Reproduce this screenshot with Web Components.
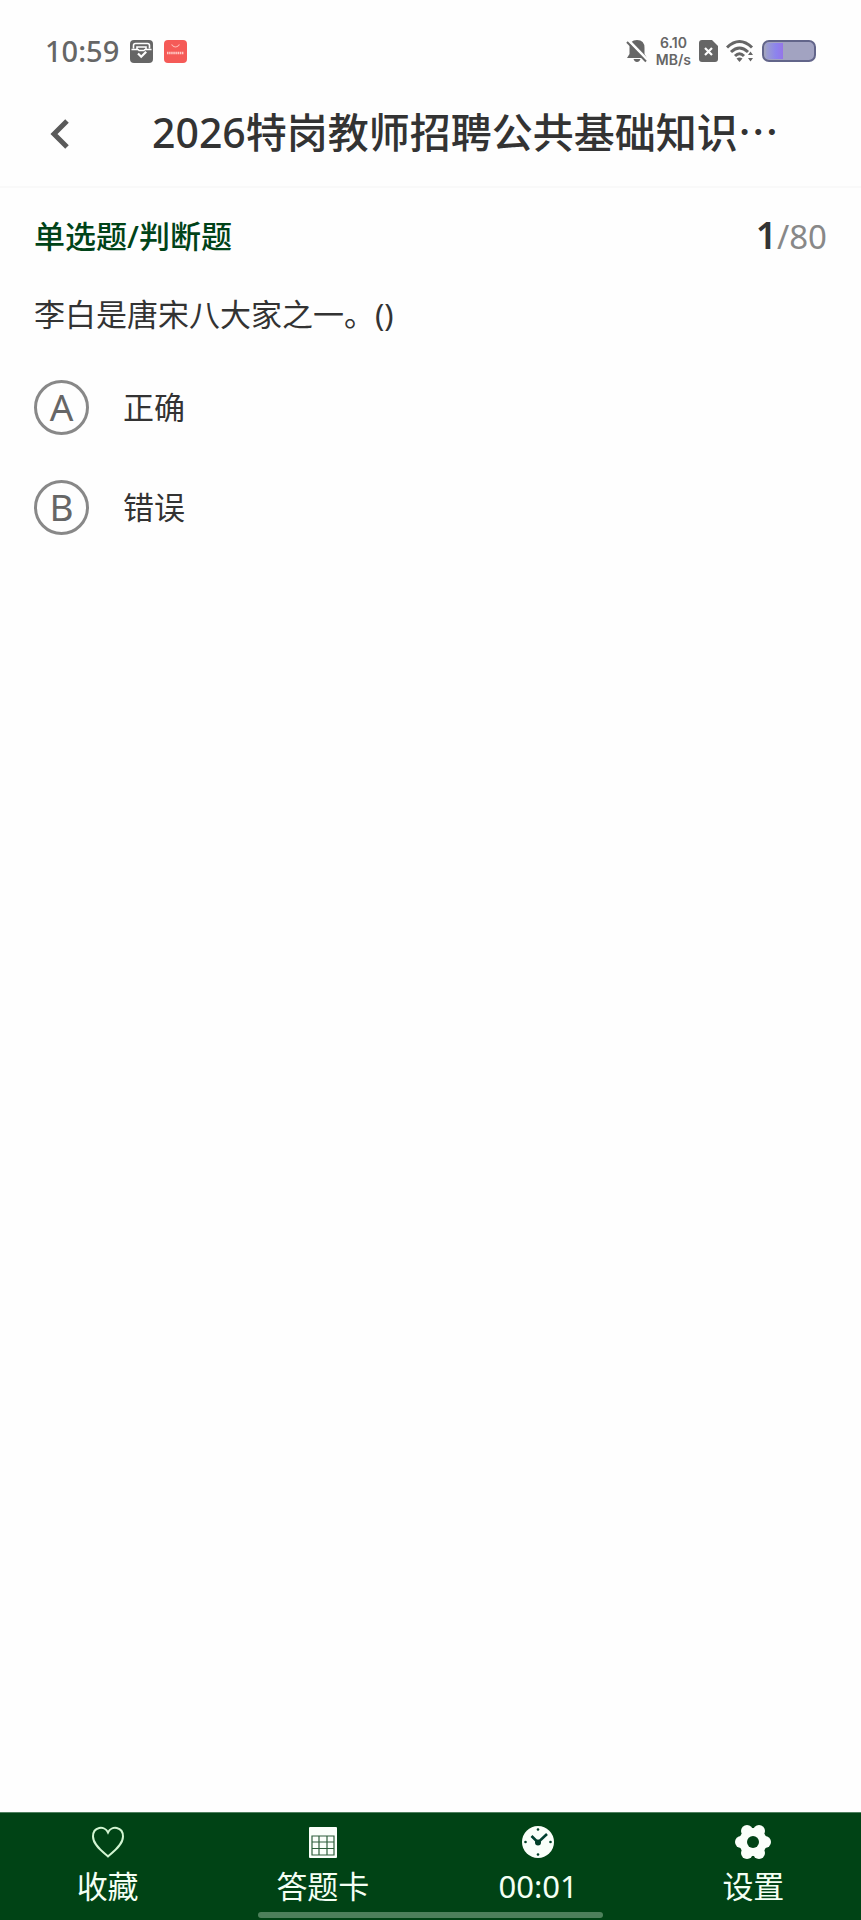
<!DOCTYPE html>
<html lang="zh-CN">
<head>
<meta charset="utf-8">
<meta name="viewport" content="width=device-width, initial-scale=1">
<title>2026特岗教师招聘公共基础知识</title>
<style>
  body {
    margin: 0;
    background: #fefefe;
    color: #333;
    font-family: "Noto Sans", "Noto Sans CJK SC", sans-serif;
  }
</style>
</head>
<body>
<quiz-app></quiz-app>

<script>
class StatusBar extends HTMLElement {
  constructor() {
    super();
    this.attachShadow({ mode: 'open' });
  }

  connectedCallback() {
    this.shadowRoot.innerHTML = `
      <style>
        :host {
          display: flex;
          justify-content: space-between;
          align-items: center;
          height: 62px;
          padding: 20px 45px 0;
          color: #666;
        }
        .side {
          display: flex;
          align-items: center;
          gap: 8px;
        }
        .left {
          gap: 11px;
        }
        svg {
          display: block;
        }
        .time {
          font-size: 29px;
          line-height: 40px;
          font-weight: 500;
        }
        .speed {
          font-family: Inter, sans-serif;
          font-size: 14px;
          line-height: 17px;
          font-weight: 600;
          text-align: center;
        }
      </style>
      <div class="side left">
        <span class="time">10:59</span>
        <svg width="23" height="23" viewBox="0 0 23 23">
          <rect width="23" height="23" rx="4" fill="#666"/>
          <path d="M3.500 8.500V5.500q0-2 2-2h12q2 0 2 2v3M7 9V7h9v2" fill="none" stroke="#fff" stroke-width="1.600"/>
          <path d="M1.500 9.500h6q1 0 1.500 1h5q.5-1 1.500-1h6" fill="none" stroke="#fff" stroke-width="1.300"/>
          <path d="M8 13.500l3.200 3.200 5-5" fill="none" stroke="#fff" stroke-width="2.200"/>
        </svg>
        <svg width="23" height="23" viewBox="0 0 23 23">
          <rect width="23" height="23" rx="4" fill="#f55a57"/>
          <path d="M7.500 4.500q4 5 8 0" fill="none" stroke="#ffb9b4" stroke-width="1.200"/>
          <path d="M3 13h17" stroke="#ffc9c5" stroke-width="2.400" stroke-dasharray="1.500 .6"/>
        </svg>
      </div>
      <div class="side">
        <svg width="22" height="24" viewBox="0 0 22 24">
          <path d="M11 1q7.500 0 7.500 8v6l2.500 4H1l2.500-4V9Q3.500 1 11 1zM7.500 20h7q-1 3-3.500 3t-3.500-3z" fill="#666"/>
          <path d="M2 1l19 19.500" stroke="#fefefe" stroke-width="3"/>
          <path d="M1 3l19 19.500" stroke="#666" stroke-width="2"/>
        </svg>
        <div class="speed">6.10<br>MB/s</div>
        <svg width="19" height="22" viewBox="0 0 19 22">
          <path d="M3 0h10l6 6v13q0 3-3 3H3q-3 0-3-3V3q0-3 3-3z" fill="#666"/>
          <path d="M6 8l7 7M13 8l-7 7" stroke="#fff" stroke-width="2.200"/>
        </svg>
        <svg width="28" height="24" viewBox="0 0 28 24">
          <g fill="none" stroke="#666" stroke-width="3">
            <path d="M1 8.500q12.500-12 25 0"/>
            <path d="M5 13q8.500-8 17 0"/>
            <path d="M9 17q4.500-4.500 9 0"/>
          </g>
          <path d="M10.500 19.500q3-2.200 6 0l-3 3.500zM22 16l2.500-3.500L27 16zM22 19l2.500 3.500L27 19z" fill="#666"/>
        </svg>
        <svg width="54" height="22" viewBox="0 0 54 22">
          <defs>
            <linearGradient id="charge">
              <stop offset="0" stop-color="#9c9fcc"/>
              <stop offset=".6" stop-color="#8c83ee"/>
              <stop offset="1" stop-color="#9575e8"/>
            </linearGradient>
          </defs>
          <rect x="1" y="1" width="52" height="20" rx="6" fill="#a2a3c1" stroke="#62658a" stroke-width="2"/>
          <rect x="4" y="3" width="17" height="16" fill="url(#charge)"/>
        </svg>
      </div>
    `;
  }
}

class PageHeader extends HTMLElement {
  constructor() {
    super();
    this.attachShadow({ mode: 'open' });
  }

  connectedCallback() {
    this.shadowRoot.innerHTML = `
      <style>
        :host {
          display: flex;
          align-items: center;
          height: 104px;
          padding: 0 40px;
          border-bottom: 2px solid #f9f9f9;
        }
        button {
          display: flex;
          align-items: center;
          width: 112px;
          height: 60px;
          padding: 0 10px;
          border: 0;
          background: none;
        }
        h1 {
          margin: 0;
          padding-bottom: 4px;
          font-size: 41px;
          line-height: 60px;
          font-weight: 500;
          white-space: nowrap;
        }
        .more {
          font-family: "Noto Sans CJK SC", sans-serif;
          line-height: 1;
        }
      </style>
      <button type="button" aria-label="返回">
        <svg width="20" height="30" viewBox="0 0 20 30">
          <path d="M17 2L4 15l13 13" fill="none" stroke="#5a5a5a" stroke-width="5"/>
        </svg>
      </button>
      <h1><slot></slot><span class="more">…</span></h1>
    `;
  }
}

class QuizQuestion extends HTMLElement {
  constructor() {
    super();
    this.attachShadow({ mode: 'open' });
  }

  connectedCallback() {
    const options = this.getAttribute('options').split(',');
    this.shadowRoot.innerHTML = `
      <style>
        :host {
          display: block;
          padding: 25px 34px;
          font-size: 31px;
          line-height: 46px;
        }
        .top {
          display: flex;
          justify-content: space-between;
          align-items: center;
          height: 46px;
        }
        h2 {
          margin: 0;
          font-size: 31px;
          font-weight: 500;
          color: #004318;
        }
        .count {
          font-size: 33px;
          color: #888;
        }
        .count b {
          font-size: 37px;
          font-weight: 600;
          color: #333;
        }
        fieldset {
          margin: 0;
          padding: 0;
          border: 0;
        }
        legend {
          padding: 32px 0 20px;
        }
        label {
          display: flex;
          align-items: center;
          gap: 34px;
          height: 100px;
        }
        .mark {
          display: grid;
          place-items: center;
          width: 55px;
          height: 55px;
          color: #666;
          font-size: 37px;
        }
        .mark > * {
          grid-area: 1 / 1;
        }
        input {
          appearance: none;
          box-sizing: border-box;
          width: 55px;
          height: 55px;
          margin: 0;
          border: 3px solid #888;
          border-radius: 50%;
        }
        input:checked {
          border-color: #004318;
        }
      </style>
      <div class="top">
        <h2>${this.getAttribute('kind')}</h2>
        <div class="count"><b>${this.getAttribute('current')}</b>/${this.getAttribute('total')}</div>
      </div>
      <fieldset>
        <legend><slot></slot></legend>
        ${options.map((text, i) => `
          <label>
            <span class="mark"><input type="radio" name="answer" value="${i}"><span>${'ABCDEF'[i]}</span></span>
            <span>${text}</span>
          </label>
        `).join('')}
      </fieldset>
    `;
  }
}

class TabItem extends HTMLElement {
  constructor() {
    super();
    this.attachShadow({ mode: 'open' });
  }

  connectedCallback() {
    this.shadowRoot.innerHTML = `
      <style>
        :host {
          display: block;
          flex: 1;
        }
        button {
          display: flex;
          flex-direction: column;
          align-items: center;
          gap: 3px;
          width: 100%;
          padding: 0;
          border: 0;
          background: none;
          color: #f4fff4;
          font: inherit;
          font-size: 31px;
          line-height: 46px;
        }
      </style>
      <button type="button"><slot name="icon"></slot><slot></slot></button>
    `;
  }
}

class TabBar extends HTMLElement {
  constructor() {
    super();
    this.attachShadow({ mode: 'open' });
  }

  connectedCallback() {
    this.shadowRoot.innerHTML = `
      <style>
        :host {
          display: flex;
          position: relative;
          box-sizing: border-box;
          height: 108px;
          padding-top: 11px;
          background: #004315;
          border-top: 1px solid #4f8060;
        }
        /* system gesture handle, lies over the bar */
        .handle {
          position: absolute;
          bottom: 2px;
          left: 30%;
          right: 30%;
          height: 6px;
          border-radius: 3px;
          background: #4d805b;
        }
      </style>
      <slot></slot>
      <div class="handle"></div>
    `;
  }
}

class QuizApp extends HTMLElement {
  constructor() {
    super();
    this.attachShadow({ mode: 'open' });
  }

  connectedCallback() {
    this.shadowRoot.innerHTML = `
      <style>
        :host {
          display: flex;
          flex-direction: column;
          min-height: 100vh;
        }
        quiz-question {
          flex: 1;
        }
      </style>
      <status-bar></status-bar>
      <page-header>2026特岗教师招聘公共基础知识</page-header>
      <quiz-question kind="单选题/判断题" current="1" total="80" options="正确,错误">李白是唐宋八大家之一。()</quiz-question>
      <tab-bar>
        <tab-item>
          <svg slot="icon" width="36" height="36" viewBox="0 0 36 36">
            <path d="M18 32.500C13 28 3 21 3 12.500C3 2.500 14.500 1 18 8.500C21.500 1 33 2.500 33 12.500C33 21 23 28 18 32.500z" fill="none" stroke="#d2f5d2" stroke-width="2"/>
          </svg>
          收藏
        </tab-item>
        <tab-item>
          <svg slot="icon" width="36" height="36" viewBox="0 0 36 36">
            <rect x="4" y="3" width="28" height="31" rx="1" fill="#fafffa"/>
            <path d="M7 12h22v19H7zM7 18h22M7 24.500h22M14 12v19M22 12v19" fill="none" stroke="#2f5f3c" stroke-width="1.200"/>
          </svg>
          答题卡
        </tab-item>
        <tab-item>
          <svg slot="icon" width="36" height="36" viewBox="0 0 36 36">
            <circle cx="18" cy="18" r="16" fill="#fafffa"/>
            <path d="M11.500 12L18 18.500l9-8.500" fill="none" stroke="#004030" stroke-width="2.600"/>
            <g fill="#003f28">
              <circle cx="18" cy="18.500" r="3"/>
              <circle cx="18" cy="5.500" r="1.300"/>
              <circle cx="18" cy="30.500" r="1.300"/>
              <circle cx="5.500" cy="18" r="1.300"/>
              <circle cx="30.500" cy="18" r="1.300"/>
            </g>
          </svg>
          00:01
        </tab-item>
        <tab-item>
          <svg slot="icon" width="36" height="36" viewBox="0 0 36 36">
            <g fill="#fafffa">
              <circle cx="18" cy="18" r="14"/>
              <circle cx="6" cy="18" r="6"/>
              <circle cx="30" cy="18" r="6"/>
              <circle cx="12" cy="7" r="6"/>
              <circle cx="24" cy="7" r="6"/>
              <circle cx="12" cy="29" r="6"/>
              <circle cx="24" cy="29" r="6"/>
            </g>
            <circle cx="18" cy="18" r="6" fill="#004315"/>
          </svg>
          设置
        </tab-item>
      </tab-bar>
    `;
  }
}

customElements.define('status-bar', StatusBar);
customElements.define('page-header', PageHeader);
customElements.define('quiz-question', QuizQuestion);
customElements.define('tab-item', TabItem);
customElements.define('tab-bar', TabBar);
customElements.define('quiz-app', QuizApp);
</script>
</body>
</html>
